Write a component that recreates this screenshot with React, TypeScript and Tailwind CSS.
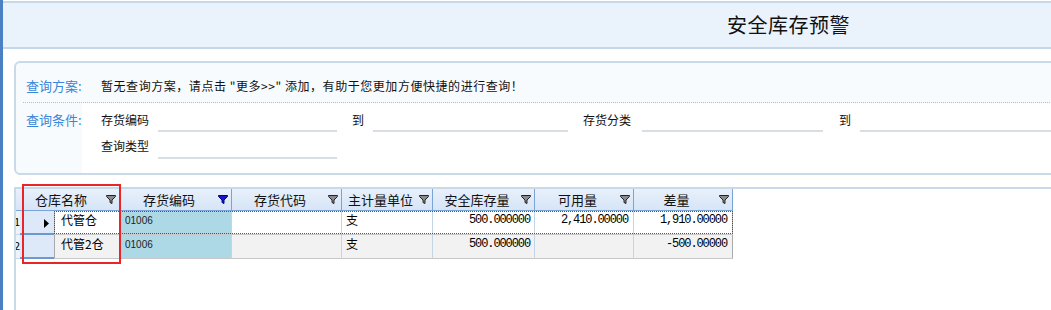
import React from "react";

function Funnel({ active }: { active?: boolean }) {
  return (
    <svg width="10" height="9" viewBox="0 0 10 9" className="shrink-0">
      <path
        d="M0.5 0.5 H9.5 V1.5 L6 5 V8.5 L4 7.5 V5 L0.5 1.5 Z"
        fill={active ? "#1414c8" : "#8a8a8a"}
        stroke={active ? "#00008c" : "#222"}
        strokeWidth="1"
        strokeLinejoin="round"
      />
    </svg>
  );
}

const cols = [
  { w: "w-[112px]", title: "存货编码", active: true },
  { w: "w-[110px]", title: "存货代码" },
  { w: "w-[91px]", title: "主计量单位" },
  { w: "w-[102px]", title: "安全库存量" },
  { w: "w-[99px]", title: "可用量" },
  { w: "w-[99px]", title: "差量" },
];

type Row = {
  n: string;
  name: string;
  code: string;
  unit: string;
  safe: string;
  avail: string;
  diff: string;
  current?: boolean;
};

const rows: Row[] = [
  { n: "1", name: "代管仓", code: "01006", unit: "支", safe: "500.000000", avail: "2,410.00000", diff: "1,910.00000", current: true },
  { n: "2", name: "代管2仓", code: "01006", unit: "支", safe: "500.000000", avail: "", diff: "-500.00000" },
];

function Underline({ w, h }: { w: string; h: string }) {
  return <div className={`${w} ${h} border-b-2 border-[#d9dde4] shrink-0`} />;
}

export default function App() {
  const num = "font-['Liberation_Mono',monospace] text-[12px] tracking-[-1.1px] text-right";
  return (
    <div className="relative w-[1051px] h-[310px] overflow-hidden bg-white border-l-[3px] border-[#4a80c4] text-black font-['Noto_Sans_CJK_SC',sans-serif] text-[12px] flex flex-col">
      {/* top title band */}
      <div className="mt-[1px] h-[48px] shrink-0 border-t-2 border-b-2 border-[#c6d7e9] bg-[#eaf2fc] flex items-center pl-[724px]">
        <span className="text-[20px] leading-none tracking-[0.5px] text-[#111]">安全库存预警</span>
      </div>

      {/* query panel */}
      <div className="ml-[11px] mt-[12px] w-[1100px] h-[114px] shrink-0 border-2 border-[#c9d9ea] rounded-[6px] bg-[#f8fbfe] overflow-hidden flex flex-col">
        <div className="h-[39px] flex items-start pt-[15px] pl-[10px] leading-[16px]">
          <span className="w-[75px] text-[13px] text-[#3a86d8]">查询方案:</span>
          <span className="text-[#111] tracking-[0.55px]">暂无查询方案，请点击 "更多&gt;&gt;" 添加，有助于您更加方便快捷的进行查询！</span>
        </div>
        <div className="ml-[7px] border-t border-dotted border-[#bdbdbd]" />
        <div className="flex flex-1">
          <div className="w-[66px] pl-[10px] pt-[9px] leading-[16px] text-[13px] text-[#3a86d8]">查询条件:</div>
          <div className="flex-1 bg-white pl-[19px] flex flex-col leading-[16px] text-[#111]">
            <div className="flex items-start">
              <span className="w-[57px] mt-[9px] shrink-0">存货编码</span>
              <Underline w="w-[179px]" h="h-[29px]" />
              <span className="ml-[15px] w-[21px] mt-[9px] shrink-0">到</span>
              <Underline w="w-[195px]" h="h-[29px]" />
              <span className="ml-[15px] w-[59px] mt-[9px] shrink-0">存货分类</span>
              <Underline w="w-[181px]" h="h-[29px]" />
              <span className="ml-[16px] w-[21px] mt-[9px] shrink-0">到</span>
              <Underline w="w-[240px]" h="h-[29px]" />
            </div>
            <div className="flex items-start">
              <span className="w-[57px] mt-[6px] shrink-0">查询类型</span>
              <Underline w="w-[179px]" h="h-[27px]" />
            </div>
          </div>
        </div>
      </div>

      {/* grid */}
      <div className="ml-[11px] mt-[12px] flex-1 border-l-2 border-t-2 border-[#c9d9ea]">
        {/* header */}
        <div className="flex h-[22px] text-[13px] leading-[16px] text-[#111]">
          <div className="w-[104px] flex items-center border-r border-b border-[#7ba4d6] bg-gradient-to-b from-[#e8f0fb] to-[#d6e5f7]">
            <span className="flex-1 text-center">仓库名称</span>
            <span className="mr-[3px]"><Funnel /></span>
          </div>
          {cols.map((c) => (
            <div
              key={c.title}
              className={`${c.w} flex items-center border-r border-b border-[#7ba4d6] bg-gradient-to-b from-[#e8f0fb] to-[#d6e5f7]`}
            >
              <span className="flex-1 text-center">{c.title}</span>
              <span className="mr-[3px]"><Funnel active={c.active} /></span>
            </div>
          ))}
        </div>

        {/* rows */}
        {rows.map((r) => {
          const bg = r.current ? "bg-white" : "bg-[#f2f2f2]";
          return (
            <div key={r.n} className="flex h-[24px] leading-[16px]">
              <div className="w-[4px] overflow-hidden text-[11px] pt-[2px] bg-[#eef3fa] border-b border-[#c9d9ea]">
                <span className="-ml-[2px] block">{r.n}</span>
              </div>
              <div className="w-[34px] bg-[#dde8f8] border-b-2 border-[#6d97cf] flex items-center justify-end pr-[5px]">
                {r.current && (
                  <svg width="5" height="9" viewBox="0 0 5 9" className="mt-[3px]">
                    <path d="M0 0 L5 4.5 L0 9 Z" fill="#000" />
                  </svg>
                )}
              </div>
              <div className={`relative flex ${bg} border-b border-[#c8c8c8]`}>
                <div className="w-[66px] pl-[6px] pt-[1px] border-l border-r border-[#a9a9a9]">{r.name}</div>
                <div className="w-[112px] bg-[#add8e6] pl-[5px] pt-[2px] font-['Liberation_Sans',sans-serif] text-[10px] text-[#222] border-r border-[#c5d5e8]">
                  {r.code}
                </div>
                <div className="w-[110px] border-r border-[#c5d5e8]" />
                <div className="w-[91px] pl-[4px] pt-[1px] border-r border-[#c5d5e8]">{r.unit}</div>
                <div className={`w-[102px] pr-[4px] pt-[1px] border-r border-[#c5d5e8] ${num}`}>{r.safe}</div>
                <div className={`w-[99px] pr-[5px] pt-[1px] border-r border-[#c5d5e8] ${num}`}>{r.avail}</div>
                <div className={`w-[99px] pr-[5px] pt-[1px] border-r border-[#a9a9a9] ${num}`}>{r.diff}</div>
                {r.current && (
                  <div className="pointer-events-none absolute inset-0 border border-dotted border-[#555]" />
                )}
              </div>
            </div>
          );
        })}
      </div>

      {/* red annotation box */}
      <div className="pointer-events-none absolute left-[19px] top-[184px] w-[99px] h-[80px] border-2 border-[#e8262a]" />
    </div>
  );
}
